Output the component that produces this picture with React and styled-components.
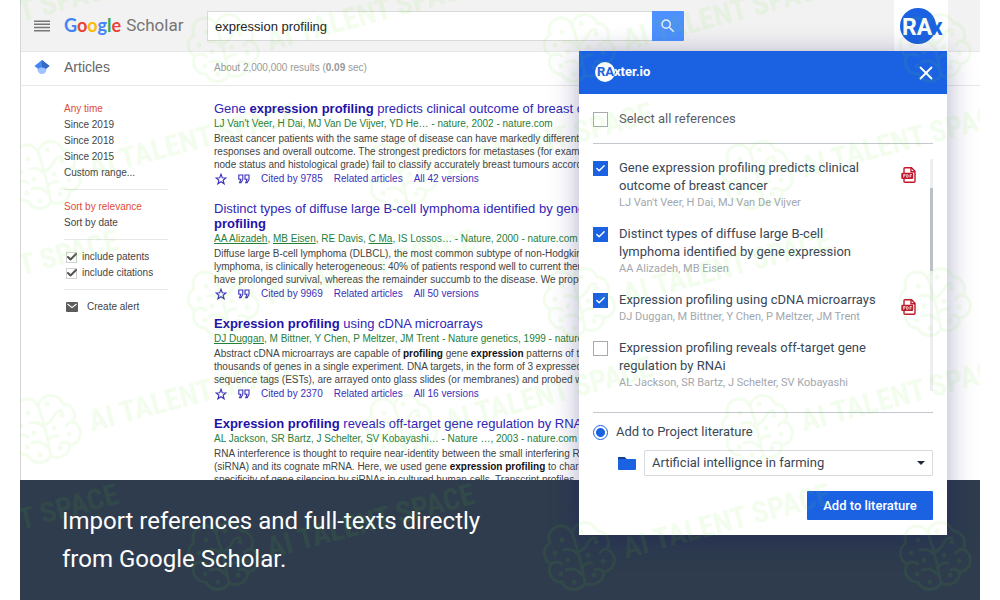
import React, { useState } from "react";
import styled, { createGlobalStyle } from "styled-components";
import { Check, X } from "lucide-react";
import { MdSearch } from "react-icons/md";

const GlobalStyle = createGlobalStyle`
  * {
    box-sizing: border-box;
  }
  body {
    margin: 0;
    background: #fff;
    font-family: "Liberation Sans", Arial, sans-serif;
  }
  button, input, select {
    font: inherit;
  }
`;

const Frame = styled.div`
  position: relative;
  display: grid;
  grid-template-rows: minmax(0, 1fr) auto;
  height: 100vh;
  margin: 0 20px;
  overflow: hidden;
`;

const Scholar = styled.main`
  border-left: 1px solid #d6d6d6;
  overflow: hidden;
`;

const TopBar = styled.header`
  display: flex;
  align-items: center;
  height: 52px;
  padding-right: 32px;
  background: #f2f2f2;
  border-bottom: 1px solid #e6e6e6;
`;

const MenuButton = styled.button`
  display: flex;
  justify-content: center;
  width: 43px;
  padding: 0 2px 0 0;
  border: 0;
  background: none;
`;

const Brand = styled.a`
  display: flex;
  gap: 5px;
  width: 143px;
  padding-bottom: 2px;
  color: #757575;
  font: 17px/24px Roboto, sans-serif;
  text-decoration: none;
`;

const Google = styled.span`
  font: 700 18px/24px Lato, sans-serif;
`;

const Letter = styled.span`
  color: ${(props) => props.$color};
`;

const SearchForm = styled.form`
  display: flex;
  flex: 0 1 477px;
  height: 30px;
`;

const SearchInput = styled.input`
  flex: 1;
  min-width: 0;
  padding: 2px 7px 0;
  border: 1px solid #d9d9d9;
  border-right: 0;
  color: #222;
  font-size: 13px;
`;

const SearchButton = styled.button`
  display: flex;
  align-items: center;
  justify-content: center;
  width: 32px;
  padding: 0;
  border: 0;
  border-radius: 0 1px 1px 0;
  background: #4d90fe;
  color: #e8f0ff;
`;

const ExtensionButton = styled.button`
  height: 52px;
  margin-left: auto;
  padding: 0;
  border: 0;
  background: #fff;
`;

const SubBar = styled.div`
  display: flex;
  align-items: center;
  height: 34px;
  padding-bottom: 3px;
  border-bottom: 1px solid #e8e8e8;
`;

const IconCell = styled.div`
  display: flex;
  justify-content: center;
  width: 43px;
  padding-right: 2px;
`;

const Section = styled.h1`
  width: 150px;
  margin: 0;
  color: #666;
  font-size: 14px;
  font-weight: 400;
`;

const Stats = styled.p`
  margin: 0;
  color: #999;
  font-size: 10px;
`;

const Columns = styled.div`
  display: grid;
  grid-template-columns: 104px 580px;
  gap: 46px;
  padding: 15px 0 0 43px;
`;

const FilterGroup = styled.div`
  padding-bottom: 8px;
  margin-bottom: 9px;
  border-bottom: 1px solid #e8e8e8;
`;

const Filter = styled.a`
  display: block;
  color: ${(props) => (props.$active ? "#dd4b39" : "#444")};
  font-size: 10px;
  line-height: 16px;
  text-decoration: none;
`;

const Include = styled.label`
  display: flex;
  align-items: center;
  gap: 4px;
  padding-left: 2px;
  color: #444;
  font-size: 10px;
  line-height: 16px;
  white-space: nowrap;
`;

const Alert = styled.a`
  display: flex;
  align-items: center;
  gap: 9px;
  padding-left: 2px;
  color: #444;
  font-size: 10px;
  line-height: 16px;
  text-decoration: none;
`;

const Results = styled.div`
  display: flex;
  flex-direction: column;
  gap: 15px;
  white-space: nowrap;
`;

const ResultTitle = styled.h2`
  margin: 0;
  font-size: 13px;
  font-weight: 400;
  line-height: 15px;

  a {
    color: #3226b6;
    text-decoration: none;
  }

  b {
    color: #1f12a8;
  }
`;

const Source = styled.p`
  margin: 0;
  color: #26803a;
  font-size: 10px;
  line-height: 16px;

  a {
    color: inherit;
  }
`;

const Snippet = styled.p`
  margin: 0;
  color: #444;
  font-size: 10px;
  line-height: 13px;

  b {
    color: #111;
  }
`;

const Actions = styled.div`
  display: flex;
  align-items: center;
  gap: 11px;
  height: 15px;
  padding-left: 1px;
  font-size: 10px;

  a {
    color: #3a2fba;
    text-decoration: none;
  }
`;

const Caption = styled.footer`
  padding: 22px 42px;
  background: #2e3c4e;
  color: #fff;
  font: 24px/38px Roboto, sans-serif;
`;

const Dialog = styled.section`
  position: absolute;
  top: 51px;
  right: 33px;
  width: 368px;
  background: #fff;
  box-shadow: 0 4px 26px rgba(20, 20, 100, 0.34);
  color: #3a4757;
  font: 13px/18px Roboto, sans-serif;
`;

const DialogHeader = styled.header`
  display: flex;
  align-items: center;
  justify-content: space-between;
  height: 43px;
  padding: 0 10px 2px 16px;
  background: #1b62e3;
`;

const CloseButton = styled.button`
  display: flex;
  padding: 2px 0 0;
  border: 0;
  background: none;
  color: #fff;
`;

const DialogBody = styled.div`
  padding: 16px 14px 15px;
`;

const SelectAll = styled.label`
  display: flex;
  gap: 11px;
  padding-bottom: 15px;
  border-bottom: 1px solid #c3c8cf;
  color: #5b6068;
`;

const Scroller = styled.div`
  display: flex;
  margin-top: 15px;
  padding-bottom: 21px;
  border-bottom: 1px solid #c3c8cf;
`;

const ReferenceList = styled.ul`
  display: flex;
  flex: 1;
  flex-direction: column;
  gap: 14px;
  margin: 0;
  padding: 0;
  list-style: none;
`;

const Reference = styled.li`
  display: flex;
  gap: 11px;
`;

const ReferenceText = styled.label`
  width: 262px;
`;

const Authors = styled.span`
  display: block;
  color: #a3a7ad;
  font-size: 11px;
  line-height: 16px;
`;

const PdfLink = styled.a`
  display: flex;
  align-items: flex-start;
  margin-left: 9px;
  padding-top: 7px;
`;

const Track = styled.div`
  width: 3px;
  padding-top: 29px;
  background: #eceeef;
`;

const Thumb = styled.div`
  height: 83px;
  background: #b9c0c7;
`;

const TickWrap = styled.span`
  position: relative;
  display: flex;
  flex: none;
  width: 15px;
  height: 15px;
  margin-top: 2px;

  svg {
    position: absolute;
    inset: 2px;
    color: #fff;
    pointer-events: none;
  }
`;

const TickInput = styled.input`
  appearance: none;
  width: 15px;
  height: 15px;
  margin: 0;
  border: 1px solid #a6abb1;
  background: #fff;

  &:checked {
    border-color: #1b62e3;
    background: #1b62e3;
  }
`;

const SmallTickWrap = styled(TickWrap)`
  width: 12px;
  height: 12px;
  margin: 0;

  svg {
    inset: 0;
    color: #555;
  }
`;

const SmallTickInput = styled.input`
  appearance: none;
  width: 11px;
  height: 11px;
  margin: 1px 0 0;
  border: 1px solid #d0d0d0;
  background: #fff;
`;

const RadioLabel = styled.label`
  display: flex;
  align-items: center;
  gap: 8px;
  padding-top: 10px;
`;

const Radio = styled.input`
  appearance: none;
  width: 15px;
  height: 15px;
  margin: 0;
  border: 1px solid #1b62e3;
  border-radius: 50%;

  &:checked {
    background: radial-gradient(circle, #1b62e3 4px, #fff 5px);
  }
`;

const ProjectRow = styled.div`
  display: flex;
  align-items: center;
  gap: 8px;
  padding: 9px 0 15px 25px;
`;

const SelectWrap = styled.div`
  position: relative;
  flex: 1;

  svg {
    position: absolute;
    top: 11px;
    right: 8px;
    pointer-events: none;
  }
`;

const ProjectSelect = styled.select`
  appearance: none;
  width: 100%;
  height: 26px;
  padding: 0 24px 0 7px;
  border: 1px solid #d7dbe0;
  border-radius: 1px;
  background: #fff;
  color: #3a4757;
`;

const AddButton = styled.button`
  display: block;
  width: 126px;
  height: 29px;
  margin-left: auto;
  padding: 0;
  border: 0;
  border-radius: 1px;
  background: #1b62e3;
  color: #fff;
  font-weight: 500;
`;

const Overlay = styled.svg`
  position: absolute;
  inset: 0;
  width: 100%;
  height: 100%;
  pointer-events: none;
`;

const wordmark = [
  ["G", "#4285f4"],
  ["o", "#ea4335"],
  ["o", "#fbbc05"],
  ["g", "#4285f4"],
  ["l", "#34a853"],
  ["e", "#ea4335"],
];

const results = [
  {
    title: (
      <>
        Gene <b>expression profiling</b> predicts clinical outcome of breast cancer
      </>
    ),
    source: "LJ Van't Veer, H Dai, MJ Van De Vijver, YD He… - nature, 2002 - nature.com",
    snippet: (
      <>
        Breast cancer patients with the same stage of disease can have markedly different treatment
        <br />
        responses and overall outcome. The strongest predictors for metastases (for example, lymph
        <br />
        node status and histological grade) fail to classify accurately breast tumours according to
      </>
    ),
    cited: 9785,
    versions: 42,
  },
  {
    title: (
      <>
        Distinct types of diffuse large B-cell lymphoma identified by gene <b>expression</b>
        <br />
        <b>profiling</b>
      </>
    ),
    source: (
      <>
        <a href="#alizadeh">AA Alizadeh</a>, <a href="#eisen">MB Eisen</a>, RE Davis,{" "}
        <a href="#ma">C Ma</a>, IS Lossos… - Nature, 2000 - nature.com
      </>
    ),
    snippet: (
      <>
        Diffuse large B-cell lymphoma (DLBCL), the most common subtype of non-Hodgkin's
        <br />
        lymphoma, is clinically heterogeneous: 40% of patients respond well to current therapy and
        <br />
        have prolonged survival, whereas the remainder succumb to the disease. We proposed
      </>
    ),
    cited: 9969,
    versions: 50,
  },
  {
    title: (
      <>
        <b>Expression profiling</b> using cDNA microarrays
      </>
    ),
    source: (
      <>
        <a href="#duggan">DJ Duggan</a>, M Bittner, Y Chen, P Meltzer, JM Trent - Nature genetics,
        1999 - nature.com
      </>
    ),
    snippet: (
      <>
        Abstract cDNA microarrays are capable of <b>profiling</b> gene <b>expression</b> patterns of
        tens of
        <br />
        thousands of genes in a single experiment. DNA targets, in the form of 3 expressed
        <br />
        sequence tags (ESTs), are arrayed onto glass slides (or membranes) and probed with
      </>
    ),
    cited: 2370,
    versions: 16,
  },
  {
    title: (
      <>
        <b>Expression profiling</b> reveals off-target gene regulation by RNAi
      </>
    ),
    source: "AL Jackson, SR Bartz, J Schelter, SV Kobayashi… - Nature …, 2003 - nature.com",
    snippet: (
      <>
        RNA interference is thought to require near-identity between the small interfering RNA
        <br />
        (siRNA) and its cognate mRNA. Here, we used gene <b>expression profiling</b> to characterize
        <br />
        specificity of gene silencing by siRNAs in cultured human cells. Transcript profiles
      </>
    ),
  },
];

const references = [
  {
    title: "Gene expression profiling predicts clinical outcome of breast cancer",
    authors: "LJ Van't Veer, H Dai, MJ Van De Vijver",
    pdf: true,
  },
  {
    title: "Distinct types of diffuse large B-cell lymphoma identified by gene expression",
    authors: "AA Alizadeh, MB Eisen",
  },
  {
    title: "Expression profiling using cDNA microarrays",
    authors: "DJ Duggan, M Bittner, Y Chen, P Meltzer, JM Trent",
    pdf: true,
  },
  {
    title: "Expression profiling reveals off-target gene regulation by RNAi",
    authors: "AL Jackson, SR Bartz, J Schelter, SV Kobayashi",
  },
];

const MenuIcon = () => (
  <svg width="16" height="12" viewBox="0 0 16 12" fill="#777">
    <path d="M0 .5h16v1.500H0zM0 3.600h16v1.500H0zM0 6.800h16v1.500H0zM0 10h16v1.500H0z" />
  </svg>
);

const CapIcon = () => (
  <svg width="16" height="16" viewBox="0 0 16 16">
    <circle cx="8" cy="10.500" r="4.500" fill="#a0c3ff" />
    <path d="M8 1 .5 7 4 9.800Q8 6.500 12 9.800L15.500 7z" fill="#4285f4" />
    <path d="M8 1v7.200q2.500 0 4 1.600L15.500 7z" fill="#356ac3" />
  </svg>
);

const StarIcon = () => (
  <svg width="12" height="12" viewBox="0 0 12 12" fill="none" stroke="#3a2fba" strokeWidth="1.100">
    <path d="M6 1.200 7.300 4.700l3.700.2-2.900 2.300 1 3.600L6 8.700l-3.100 2.100 1-3.600L1 4.900l3.700-.2z" />
  </svg>
);

const QuoteIcon = () => (
  <svg width="12" height="10" viewBox="0 0 12 10" fill="none" stroke="#3a2fba" strokeWidth="1.100">
    <path d="M.8 1h4v4.400L3 8.600H1.600L2.800 5.200h-2zM7 1h4v4.400L9.200 8.600H7.800L9 5.200H7z" />
  </svg>
);

const MailIcon = () => (
  <svg width="12" height="10" viewBox="0 0 12 10">
    <rect width="12" height="10" rx="1" fill="#5c5c5c" />
    <path d="m1.500 2 4.500 3.600L10.500 2" fill="none" stroke="#fff" strokeWidth="1.200" />
  </svg>
);

const PdfIcon = () => (
  <svg width="16" height="18" viewBox="0 0 16 18" fill="none" stroke="#c1172c" strokeWidth="1.400">
    <path d="M3 7V2.700q0-1 1-1h6.500L14 5.200v10q0 1-1 1H4q-1 0-1-1V13" />
    <path d="M10 2v3.700h4" />
    <rect x="1" y="7.400" width="10.500" height="5" rx=".6" fill="#c1172c" />
    <path
      d="M2.600 11.600V8.400h1.500v1.500H2.700M5.700 8.500v2.900h.6q1 0 1-1.400t-1-1.500zM9 11.600V8.500h1.800M9 10h1.500"
      stroke="#fff"
      strokeWidth=".7"
    />
  </svg>
);

const FolderIcon = () => (
  <svg width="18" height="13" viewBox="0 0 18 13">
    <path d="M1 0h5.500l2 2H17q1 0 1 1v9q0 1-1 1H1q-1 0-1-1V1q0-1 1-1z" fill="#1b62e3" />
    <path d="M1 0h5.500l2 2H0V1q0-1 1-1z" fill="#163e8f" />
  </svg>
);

const RaxLogo = () => (
  <svg width="54" height="51" viewBox="0 0 54 51" fontFamily="Roboto" fontWeight="700" fontSize="23">
    <circle cx="24" cy="26" r="18" fill="#1b62e3" />
    <text x="37" y="35" fill="#1b62e3">
      x
    </text>
    <text x="8" y="35" fill="#fff">
      RA
    </text>
  </svg>
);

const RaxterLogo = () => (
  <svg width="64" height="22" viewBox="0 0 64 22" fontFamily="Roboto" fontWeight="700" fontSize="13">
    <circle cx="10" cy="11" r="10" fill="#fff" />
    <text x="2" y="15" fill="#1b62e3">
      RA
    </text>
    <text x="19" y="15" fill="#fff">
      xter.io
    </text>
  </svg>
);

// Brain outline: a ring of lobes, a stem down the middle and a dot in each lobe
const Stamp = ({ x, y }) => (
  <g transform={`translate(${x} ${y})`}>
    <g fill="none" stroke="#62dc22" strokeWidth="3" strokeLinecap="round" strokeLinejoin="round">
      <path d="M-6-25A12 12 0 0 0-28-15A12 12 0 0 0-27 6A12 12 0 0 0-16 24A13 13 0 0 0 7 25A13 13 0 0 0 26 14A12 12 0 0 0 29-9A12 12 0 0 0 19-27A13 13 0 0 0-6-25" />
      <path d="M-6-25Q0-8 3 6T7 25M-14-8q9-2 13 4M-12 12q9-3 15 4M-27 6q6-4 11 0M1-6q6-3 9-9t8-5M4 9q5-5 10-4M29-9q-5 0-7 4M26 14q-5-4-9-2" />
    </g>
    <g fill="#62dc22">
      <circle cx="-16" cy="-18" r="2.500" />
      <circle cx="-23" cy="-5" r="2.500" />
      <circle cx="3" cy="-27" r="2.500" />
      <circle cx="18" cy="-16" r="2.500" />
      <circle cx="25" cy="3" r="2.500" />
      <circle cx="16" cy="17" r="2.500" />
      <circle cx="-4" cy="24" r="2.500" />
      <circle cx="-17" cy="16" r="2.500" />
      <circle cx="-10" cy="2" r="2.500" />
      <circle cx="10" cy="-3" r="2.500" />
    </g>
    <text
      x="46"
      y="13"
      transform="rotate(-15)"
      fill="#62dc22"
      fontFamily="Roboto Condensed, Roboto, sans-serif"
      fontWeight="700"
      fontSize="30"
    >
      AI TALENT SPACE
    </text>
  </g>
);

const stamps = [];
for (let row = -1; row < 5; row++) {
  for (let col = -1; col < 3; col++) {
    stamps.push({ x: 202 + col * 356 + (row % 2 ? 178 : 0), y: 50 + row * 127 });
  }
}

const Tick = ({ id, checked, onChange }) => (
  <TickWrap>
    <TickInput id={id} type="checkbox" checked={checked} onChange={onChange} />
    {checked ? <Check size={11} strokeWidth={3} /> : null}
  </TickWrap>
);

const IncludeFilter = ({ children }) => {
  const [on, setOn] = useState(true);
  return (
    <Include>
      <SmallTickWrap>
        <SmallTickInput type="checkbox" checked={on} onChange={() => setOn(!on)} />
        {on ? <Check size={12} strokeWidth={4} /> : null}
      </SmallTickWrap>
      {children}
    </Include>
  );
};

const ImportDialog = () => {
  const [picked, setPicked] = useState([true, true, true, false]);
  const all = picked.every(Boolean);

  const toggle = (index) => setPicked(picked.map((on, i) => (i === index ? !on : on)));

  return (
    <Dialog role="dialog" aria-label="RAxter.io">
      <DialogHeader>
        <RaxterLogo />
        <CloseButton aria-label="Close">
          <X size={22} strokeWidth={2} />
        </CloseButton>
      </DialogHeader>
      <DialogBody>
        <SelectAll htmlFor="all">
          <Tick id="all" checked={all} onChange={() => setPicked(picked.map(() => !all))} />
          Select all references
        </SelectAll>
        <Scroller>
          <ReferenceList>
            {references.map((item, i) => (
              <Reference key={item.title}>
                <Tick id={`ref-${i}`} checked={picked[i]} onChange={() => toggle(i)} />
                <ReferenceText htmlFor={`ref-${i}`}>
                  {item.title}
                  <Authors>{item.authors}</Authors>
                </ReferenceText>
                {item.pdf ? (
                  <PdfLink href="#pdf" aria-label="PDF">
                    <PdfIcon />
                  </PdfLink>
                ) : null}
              </Reference>
            ))}
          </ReferenceList>
          <Track>
            <Thumb />
          </Track>
        </Scroller>
        <RadioLabel>
          <Radio type="radio" name="target" defaultChecked />
          Add to Project literature
        </RadioLabel>
        <ProjectRow>
          <FolderIcon />
          <SelectWrap>
            <ProjectSelect aria-label="Project">
              <option>Artificial intellignce in farming</option>
            </ProjectSelect>
            <svg width="8" height="4" viewBox="0 0 8 4" fill="#222c38">
              <path d="M0 0h8L4 4z" />
            </svg>
          </SelectWrap>
        </ProjectRow>
        <AddButton>Add to literature</AddButton>
      </DialogBody>
    </Dialog>
  );
};

export default function App() {
  const [query, setQuery] = useState("expression profiling");

  return (
    <>
      <GlobalStyle />
      <Frame>
        <Scholar>
          <TopBar>
            <MenuButton aria-label="Menu">
              <MenuIcon />
            </MenuButton>
            <Brand href="#home">
              <Google>
                {wordmark.map(([letter, color], i) => (
                  <Letter key={i} $color={color}>
                    {letter}
                  </Letter>
                ))}
              </Google>
              Scholar
            </Brand>
            <SearchForm onSubmit={(event) => event.preventDefault()}>
              <SearchInput
                aria-label="Search"
                value={query}
                onChange={(event) => setQuery(event.target.value)}
              />
              <SearchButton aria-label="Search">
                <MdSearch size={18} />
              </SearchButton>
            </SearchForm>
            <ExtensionButton aria-label="RAx">
              <RaxLogo />
            </ExtensionButton>
          </TopBar>
          <SubBar>
            <IconCell>
              <CapIcon />
            </IconCell>
            <Section>Articles</Section>
            <Stats>
              About 2,000,000 results (<b>0.09</b> sec)
            </Stats>
          </SubBar>
          <Columns>
            <aside>
              <FilterGroup>
                <Filter href="#any" $active>
                  Any time
                </Filter>
                <Filter href="#2019">Since 2019</Filter>
                <Filter href="#2018">Since 2018</Filter>
                <Filter href="#2015">Since 2015</Filter>
                <Filter href="#custom">Custom range...</Filter>
              </FilterGroup>
              <FilterGroup>
                <Filter href="#relevance" $active>
                  Sort by relevance
                </Filter>
                <Filter href="#date">Sort by date</Filter>
              </FilterGroup>
              <FilterGroup>
                <IncludeFilter>include patents</IncludeFilter>
                <IncludeFilter>include citations</IncludeFilter>
              </FilterGroup>
              <Alert href="#alert">
                <MailIcon />
                Create alert
              </Alert>
            </aside>
            <Results>
              {results.map((item, i) => (
                <article key={i}>
                  <ResultTitle>
                    <a href="#result">{item.title}</a>
                  </ResultTitle>
                  <Source>{item.source}</Source>
                  <Snippet>{item.snippet}</Snippet>
                  {item.cited ? (
                    <Actions>
                      <StarIcon />
                      <QuoteIcon />
                      <a href="#cited">Cited by {item.cited}</a>
                      <a href="#related">Related articles</a>
                      <a href="#versions">All {item.versions} versions</a>
                    </Actions>
                  ) : null}
                </article>
              ))}
            </Results>
          </Columns>
        </Scholar>
        <Caption>
          Import references and full-texts directly
          <br />
          from Google Scholar.
        </Caption>
        <ImportDialog />
        <Overlay aria-hidden="true">
          <g opacity="0.08">
            {stamps.map((stamp) => (
              <Stamp key={`${stamp.x}-${stamp.y}`} {...stamp} />
            ))}
          </g>
        </Overlay>
      </Frame>
    </>
  );
}
